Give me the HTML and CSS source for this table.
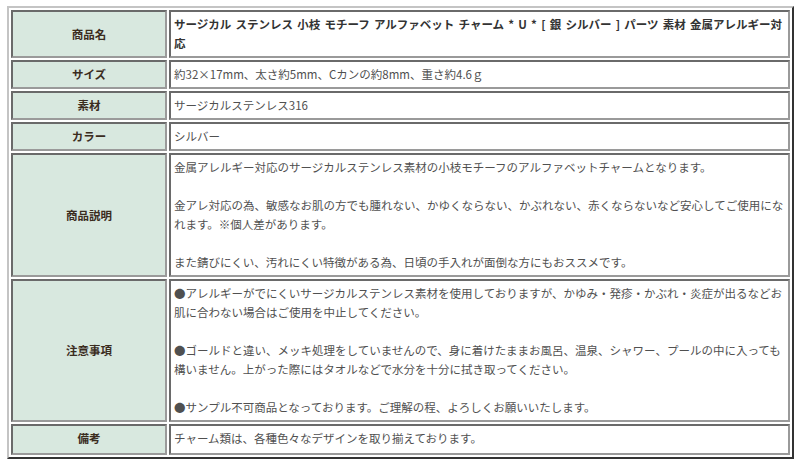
FILE: index.html
```html
<!DOCTYPE html>
<html lang="ja">
<head>
<meta charset="utf-8">
<title>商品情報</title>
<link rel="stylesheet" href="styles.css">
</head>
<body>
<table class="spec">
  <tr>
    <th class="label">商品名</th>
    <td class="value title">サージカル ステンレス 小枝 モチーフ アルファベット チャーム * U * [ 銀 シルバー ] パーツ 素材 金属アレルギー対<br>応</td>
  </tr>
  <tr>
    <th class="label">サイズ</th>
    <td class="value">約32×17mm、太さ約5mm、Cカンの約8mm、重さ約4.6ｇ</td>
  </tr>
  <tr>
    <th class="label">素材</th>
    <td class="value">サージカルステンレス316</td>
  </tr>
  <tr>
    <th class="label">カラー</th>
    <td class="value">シルバー</td>
  </tr>
  <tr>
    <th class="label">商品説明</th>
    <td class="value">
      <p>金属アレルギー対応のサージカルステンレス素材の小枝モチーフのアルファベットチャームとなります。</p>
      <p>金アレ対応の為、敏感なお肌の方でも腫れない、かゆくならない、かぶれない、赤くならないなど安心してご使用にな<br>れます。※個人差があります。</p>
      <p>また錆びにくい、汚れにくい特徴がある為、日頃の手入れが面倒な方にもおススメです。</p>
    </td>
  </tr>
  <tr>
    <th class="label">注意事項</th>
    <td class="value">
      <p>●アレルギーがでにくいサージカルステンレス素材を使用しておりますが、かゆみ・発疹・かぶれ・炎症が出るなどお<br>肌に合わない場合はご使用を中止してください。</p>
      <p>●ゴールドと違い、メッキ処理をしていませんので、身に着けたままお風呂、温泉、シャワー、プールの中に入っても<br>構いません。上がった際にはタオルなどで水分を十分に拭き取ってください。</p>
      <p>●サンプル不可商品となっております。ご理解の程、よろしくお願いいたします。</p>
    </td>
  </tr>
  <tr>
    <th class="label">備考</th>
    <td class="value">チャーム類は、各種色々なデザインを取り揃えております。</td>
  </tr>
</table>
</body>
</html>
```

FILE: styles.css
```css
html, body {
  margin: 0;
  padding: 0;
  background: #ffffff;
}

body {
  padding: 6px 0 0 7px;
  font-family: "Noto Sans CJK JP", "Noto Sans", sans-serif;
  font-size: 11.5px;
  line-height: 19px;
}

.spec {
  width: 787px;
  border-collapse: separate;
  border-spacing: 2px;
  border-style: solid;
  border-width: 2px;
  border-color: #c4c4c4 #333333 #333333 #c4c4c4;
}

.spec th,
.spec td {
  border-style: solid;
  border-width: 2px;
  border-color: #6a6a6a #9a9a9a #9a9a9a #6a6a6a;
  padding: 3px;
  line-height: 19px;
}

.label {
  width: 146px;
  background: #d8e8df;
  color: #3b2c1e;
  font-weight: bold;
  text-align: center;
  vertical-align: middle;
}

.value {
  padding-right: 2px;
  color: #505050;
  text-align: left;
  vertical-align: middle;
}

.title {
  color: #333333;
  font-weight: bold;
  word-spacing: 1.6px;
}

.value p {
  margin: 0;
}

.value p + p {
  margin-top: 19px;
}

.spec tr:last-child th,
.spec tr:last-child td {
  padding-bottom: 5px;
}
```
